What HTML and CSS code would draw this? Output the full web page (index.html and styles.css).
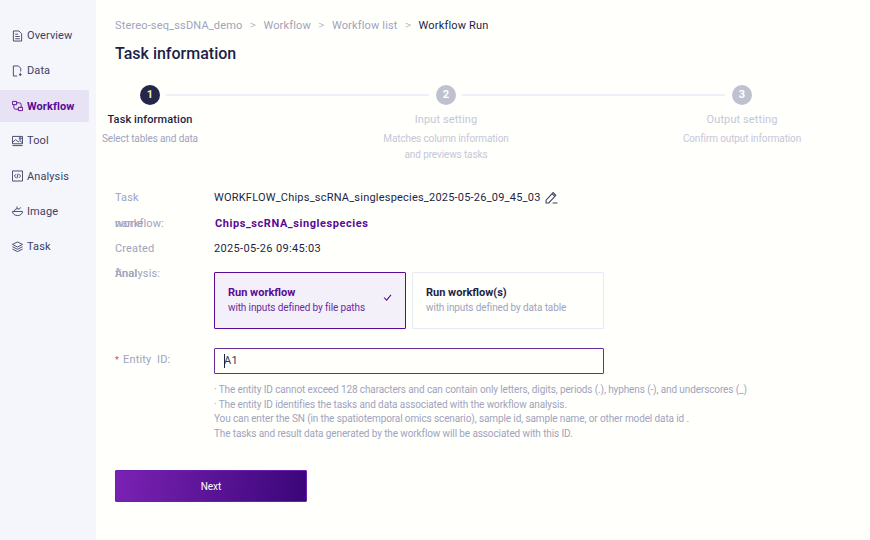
FILE: index.html
```html
<!DOCTYPE html>
<html lang="en">
<head>
<meta charset="utf-8">
<title>Workflow Run</title>
<link rel="stylesheet" href="styles.css">
</head>
<body>
<div class="app">
  <nav class="side">
    <a class="nav"><svg class="ico" viewBox="0 0 12 12"><path d="M1.500.5h6l3 3v8h-9zM3.500 4h3M3.500 6.500h5M3.500 9h5"/></svg><span>Overview</span></a>
    <a class="nav"><svg class="ico" viewBox="0 0 12 12"><path d="M5.500 11.500h-4V.5h5.500l2.500 2.500v3.500M9 8v3.500M7.500 10h3"/></svg><span>Data</span></a>
    <a class="nav active"><svg class="ico" viewBox="0 0 12 12"><path d="M.5 1h4.500v3.500H.5zM7 7.500h4.500V11H7zM5 2.500h3a2 2 0 0 1 2 2v3M7 9.500H4a2 2 0 0 1-2-2v-3"/></svg><span>Workflow</span></a>
    <a class="nav"><svg class="ico" viewBox="0 0 12 12"><path d="M.5 1h11v8h-11zM.5 11h11M.5 7.500L4 4.500 7 7l1.500-1.500 3 2.500M8 2.500h2v1.500H8z"/></svg><span>Tool</span></a>
    <a class="nav"><svg class="ico" viewBox="0 0 12 12"><path d="M.5.5h11v11h-11zM4.500 4L2.500 6l2 2M7.500 4l2 2-2 2M6.700 3.500L5.300 8.500"/></svg><span>Analysis</span></a>
    <a class="nav"><svg class="ico" viewBox="0 0 12 12"><path d="M.5 6.500h11a5.500 4.500 0 0 1-11 0zM2.500 6.500a3.500 3 0 0 1 5.500-2.500M8 4L9.500 2M5.500 1v2.500"/></svg><span>Image</span></a>
    <a class="nav"><svg class="ico" viewBox="0 0 12 12"><path d="M6 .5l5.500 2.700L6 6 .5 3.200zM.5 5.700L6 8.500l5.500-2.800M.5 8.300L6 11l5.500-2.700"/></svg><span>Task</span></a>
  </nav>
  <main class="main">
    <div class="crumbs">
      <span>Stereo-seq_ssDNA_demo</span><i>&gt;</i><span>Workflow</span><i>&gt;</i><span>Workflow list</span><i>&gt;</i><span class="now">Workflow Run</span>
    </div>
    <h1>Task information</h1>
    <div class="steps">
      <div class="step first">
        <div class="dot on">1</div>
        <div class="st on">Task information</div>
        <div class="sd">Select tables and data</div>
      </div>
      <div class="step second">
        <div class="dot">2</div>
        <div class="st">Input setting</div>
        <div class="sd">Matches column information<br>and previews tasks</div>
      </div>
      <div class="step third">
        <div class="dot">3</div>
        <div class="st">Output setting</div>
        <div class="sd">Confirm output information</div>
      </div>
    </div>
    <div class="form">
      <div class="row r1"><span class="lab">Task</span><span class="val">WORKFLOW_Chips_scRNA_singlespecies_2025-05-26_09_45_03</span><svg class="edit" viewBox="0 0 12 12"><path d="M1 11V8.500L7.500 1.500l2.500 2.500L3.500 11zM6.500 2.500l2.500 2.500M7 11h4.500"/></svg></div>
      <div class="row r2"><span class="lab"><span class="ov">name</span>workflow:</span><span class="val link">Chips_scRNA_singlespecies</span></div>
      <div class="row r3"><span class="lab">Created</span><span class="val date">2025-05-26 09:45:03</span></div>
      <div class="row r4">
        <span class="lab"><span class="ov">final</span>Analysis:</span>
        <div class="cards">
          <div class="card sel"><b>Run workflow</b><small>with inputs defined by file paths</small><svg class="chk" viewBox="0 0 10 8"><path d="M1 4l3 3 5-6"/></svg></div>
          <div class="card"><b>Run workflow(s)</b><small>with inputs defined by data table</small></div>
        </div>
      </div>
      <div class="row r5"><span class="lab"><em>*</em>Entity&nbsp; ID:</span><div class="input"><span class="caret"></span>A1</div></div>
      <div class="help">
        <p>· The entity ID cannot exceed 128 characters and can contain only letters, digits, periods (.), hyphens (-), and underscores (_)</p>
        <p>· The entity ID identifies the tasks and data associated with the workflow analysis.</p>
        <p>You can enter the SN (in the spatiotemporal omics scenario), sample id, sample name, or other model data id .</p>
        <p>The tasks and result data generated by the workflow will be associated with this ID.</p>
      </div>
      <button class="next">Next</button>
    </div>
  </main>
</div>
</body>
</html>
```
FILE: styles.css
```css
* { box-sizing: border-box; }
html, body { margin: 0; height: 100%; }
body { font-family: Roboto, "Liberation Sans", sans-serif; font-size: 11px; color: #1d1f45; background: #fffffc; overflow: hidden; }
.app { display: flex; width: 870px; height: 540px; }
.side { width: 96px; flex: none; background: #f4f6fc; padding-top: 18px; }
.nav { display: flex; align-items: center; gap: 4px; height: 35.2px; width: 89px; padding-left: 12px; color: #3d4163; font-size: 11px; letter-spacing: .1px; border-radius: 0 2px 2px 0; }
.nav.active { background: #e8e2f5; color: #5a0a96; font-weight: 700; height: 32px; margin: 2px 0 1px; }
.ico { width: 11px; height: 12px; flex: none; fill: none; stroke: currentColor; stroke-width: 1; }
.main { flex: 1; padding: 19px 0 0 19px; min-width: 0; }
.crumbs { display: flex; align-items: center; height: 13px; color: #a0a3bd; letter-spacing: .16px; }
.crumbs i { font-style: normal; width: 21px; text-align: center; font-family: "DejaVu Sans", sans-serif; font-size: 8px; color: #b4b6c8; }
.crumbs .now { color: #1d1f45; }
h1 { margin: 7px 0 0; font-size: 16px; line-height: 30px; font-weight: 500; color: #1d1f45; }
.steps { position: relative; height: 89px; margin: 16px 0 0 -19px; display: flex; }
.step { text-align: center; flex: none; position: relative; }
.step.first { width: 108px; }
.step.second { width: 200px; margin-left: 142px; }
.step.third { width: 200px; margin-left: 96px; }
.dot { width: 20px; height: 20px; margin: 0 auto; border-radius: 50%; background: #bfc1d0; color: #fff; font-size: 11px; font-weight: 700; line-height: 20px; }
.dot.on { background: #24264a; color: #f6efb5; }
.st { margin-top: 8px; line-height: 14px; font-size: 11px; color: #c5c7d8; letter-spacing: .1px; }
.st.on { color: #1d1f45; font-weight: 500; }
.sd { margin-top: 4px; line-height: 16px; font-size: 10px; color: #c5c7d8; letter-spacing: -.12px; }
.first .sd { color: #a0a3bd; }
.steps::before, .steps::after { content: ""; position: absolute; top: 9px; height: 2px; background: #eff0f7; }
.steps::before { left: 70px; width: 263px; }
.steps::after { left: 366px; width: 263px; }
.form { padding-top: 17px; }
.row { display: flex; }
.lab { width: 99px; flex: none; color: #a0a3bd; line-height: 14px; letter-spacing: .15px; }
.val { line-height: 14px; letter-spacing: .21px; color: #1d1f45; }
.date { letter-spacing: .33px; }
.ov { display: inline-block; width: 0; white-space: nowrap; }
.val.link { color: #5a0a96; font-weight: 700; letter-spacing: .56px; margin-left: 1px; }
.r1 { height: 26px; align-items: flex-start; }
.edit { width: 13px; height: 13px; margin-left: 4px; fill: none; stroke: #3d4163; stroke-width: 1; }
.r2 { height: 25px; }
.r3 { height: 25px; }
.r4 { height: 61px; }
.cards { display: flex; gap: 6px; margin-top: 5px; }
.card { position: relative; width: 192px; height: 57px; border: 1px solid #e8e9f2; border-radius: 1px; padding: 12px 13px; display: flex; flex-direction: column; }
.card.sel { border-color: #5a0a96; background: #f4f0fa; color: #5a0a96; }
.card b { font-weight: 700; font-size: 11px; line-height: 15px; }
.card small { font-size: 10px; line-height: 15px; color: #a0a3bd; letter-spacing: -.12px; }
.card.sel small { color: #6a2aa0; }
.chk { position: absolute; right: 13px; top: 21px; width: 9px; height: 7px; fill: none; stroke: #5a0a96; stroke-width: 1.2; }
.r5 { margin-top: 20px; height: 26px; align-items: center; }
.r5 .lab { position: relative; top: -1px; }
.lab em { font-style: normal; font-size: 9px; color: #e8456a; margin-right: 4px; }
.input { position: relative; width: 390px; height: 26px; border: 1px solid #6a2a9c; border-radius: 1px; padding-left: 9px; line-height: 23px; letter-spacing: .2px; color: #33355a; }
.caret { position: absolute; left: 9px; top: 5px; width: 1px; height: 14px; background: #1d1f45; }
.help { margin: 9px 0 0 99px; font-size: 10px; line-height: 14.600px; color: #a0a3bd; letter-spacing: -.11px; }
.help p { margin: 0; white-space: nowrap; }
.next { display: block; margin-top: 29px; width: 192px; height: 32px; border: 1px solid #6a1fb0; border-radius: 1px; background: linear-gradient(100deg, #7b22b4, #3a0679); color: #fff; font: 400 10px Roboto, sans-serif; }
```
